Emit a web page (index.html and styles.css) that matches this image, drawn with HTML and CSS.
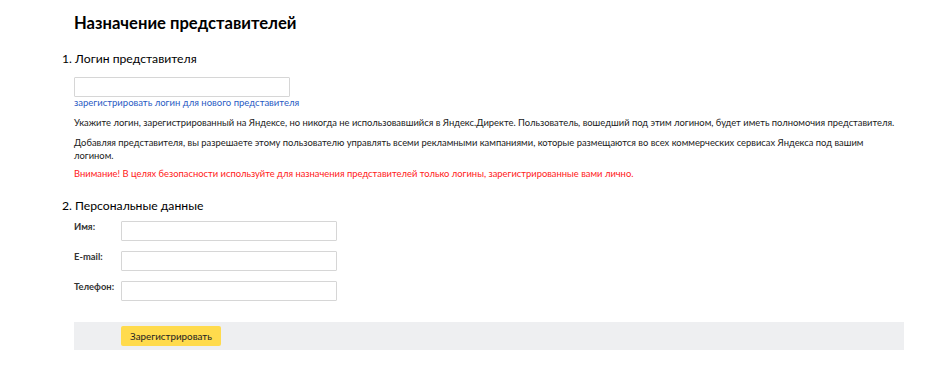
FILE: index.html
```html
<!DOCTYPE html>
<html lang="ru">
<head>
    <meta charset="UTF-8">
    <title>Назначение представителей</title>
    <link rel="stylesheet" href="styles.css">
</head>
<body>
    <div class="page">
        <h1 class="page-title">Назначение представителей</h1>

        <h2 class="step">1. Логин представителя</h2>
        <div class="step-body">
            <input type="text" class="field" id="login">
            <a href="#" class="link">зарегистрировать логин для нового представителя</a>
            <p class="note">Укажите логин, зарегистрированный на Яндексе, но никогда не использовавшийся в Яндекс.Директе. Пользователь, вошедший под этим логином, будет иметь полномочия представителя.</p>
            <p class="note">Добавляя представителя, вы разрешаете этому пользователю управлять всеми рекламными кампаниями, которые размещаются во всех коммерческих сервисах Яндекса под вашим логином.</p>
            <p class="note warning">Внимание! В целях безопасности используйте для назначения представителей только логины, зарегистрированные вами лично.</p>
        </div>

        <h2 class="step step-second">2. Персональные данные</h2>
        <div class="step-body">
            <div class="form-rows">
                <label class="row-label" for="name">Имя:</label>
                <input type="text" class="field" id="name">
                <label class="row-label" for="email">E-mail:</label>
                <input type="text" class="field" id="email">
                <label class="row-label" for="phone">Телефон:</label>
                <input type="text" class="field" id="phone">
            </div>
        </div>

        <div class="actions">
            <button class="submit">Зарегистрировать</button>
        </div>
    </div>
</body>
</html>
```

FILE: styles.css
```css
:root {
    --text: #1a1a1a;
    --link: #2a5bc4;
    --warning: #ff2020;
    --border: #d6d6d6;
    --panel: #eeeff1;
    --button: #ffdb4d;
}

body {
    margin: 0;
    font-family: Lato, "Liberation Sans", Arial, sans-serif;
    color: var(--text);
    background: #fff;
}

.page {
    width: 842px;
    padding: 13px 0 0 62px;
}

.page-title {
    margin: 0 0 0 12px;
    font-size: 16.6px;
    line-height: 20px;
    font-weight: 700;
    color: #000;
}

.step {
    margin: 18px 0 0 0;
    font-size: 12.2px;
    line-height: 16px;
    font-weight: 400;
    color: #000;
}

.step-second {
    margin-top: 18px;
}

.step-body {
    padding-left: 12px;
}

.field {
    display: block;
    box-sizing: border-box;
    width: 216px;
    height: 20px;
    margin: 10px 0 0 0;
    padding: 0 4px;
    border: 1px solid var(--border);
    border-radius: 1px;
    background: #fff;
    font: inherit;
}

.link {
    display: block;
    font-size: 9.5px;
    line-height: 12px;
    color: var(--link);
    text-decoration: none;
}

.note {
    margin: 7px 0 0 0;
    font-size: 9.4px;
    line-height: 13px;
}

.note:first-of-type {
    margin-top: 7px;
}

.warning {
    margin-top: 5px;
    color: var(--warning);
}

.form-rows {
    display: grid;
    grid-template-columns: 47px 216px;
    row-gap: 10px;
    margin-top: 7px;
}

.form-rows .field {
    margin: 0;
}

.row-label {
    padding-top: 1px;
    font-size: 9.4px;
    line-height: 10px;
    font-weight: 700;
    color: #333;
}

.actions {
    margin: 21px 0 0 12px;
    padding: 4px 0 4px 47px;
    background: var(--panel);
}

.submit {
    display: block;
    height: 20px;
    width: 100px;
    padding: 0;
    border: none;
    border-radius: 2px;
    background: var(--button);
    font-family: inherit;
    font-size: 9.8px;
    color: #222;
    cursor: pointer;
}
```
